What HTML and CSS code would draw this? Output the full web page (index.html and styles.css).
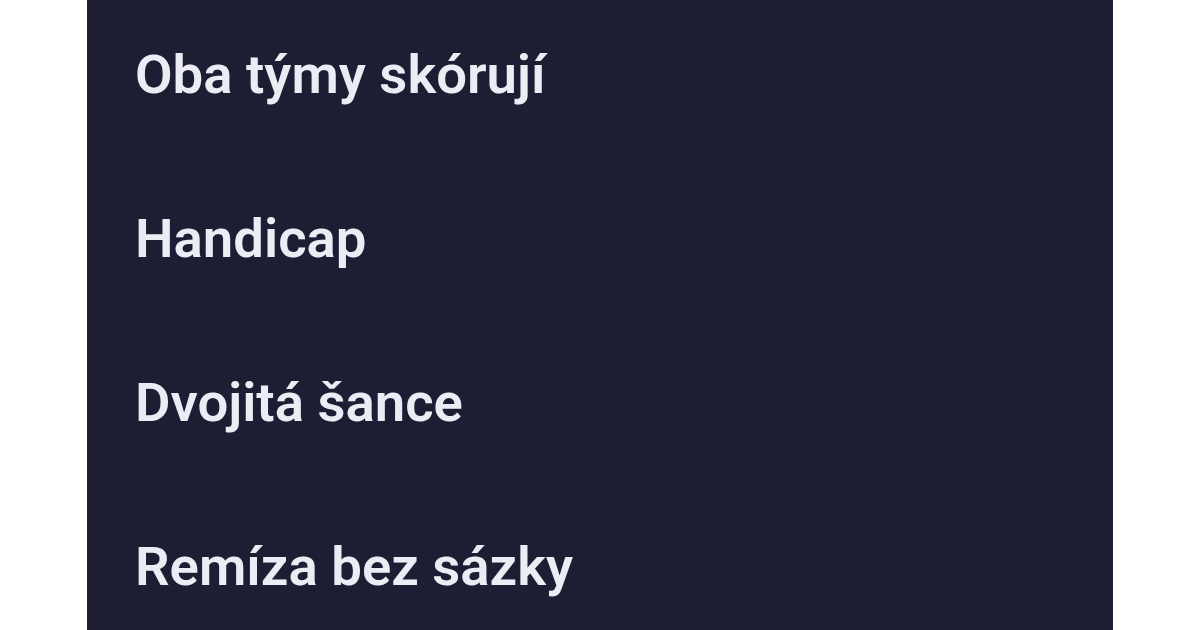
FILE: index.html
```html
<!DOCTYPE html>
<html lang="cs">
<head>
<meta charset="utf-8">
<title>Trhy</title>
<link rel="stylesheet" href="styles.css">
</head>
<body>
<nav class="panel">
  <ul class="markets">
    <li class="market">Oba týmy skórují</li>
    <li class="market">Handicap</li>
    <li class="market">Dvojitá šance</li>
    <li class="market">Remíza bez sázky</li>
  </ul>
</nav>
</body>
</html>
```
FILE: styles.css
```css
html, body {
  margin: 0;
  padding: 0;
  background: #ffffff;
  height: 100%;
  overflow: hidden;
}
.panel {
  margin-left: 87px;
  width: 1026px;
  height: 630px;
  background: #1d1d33;
  overflow: hidden;
}
.markets {
  list-style: none;
  margin: -8px 0 0 0;
  padding: 0 0 0 48px;
}
.market {
  font-family: Roboto, "Liberation Sans", sans-serif;
  font-weight: 600;
  font-size: 54.5px;
  line-height: 164px;
  color: #ececf4;
  white-space: nowrap;
}
```
